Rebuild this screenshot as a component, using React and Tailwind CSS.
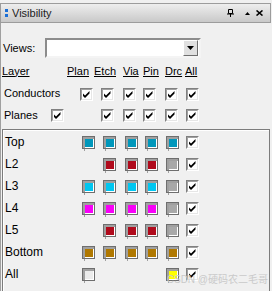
import React from 'react';

// column widths shared by the checkbox rows and the colour rows
const checkCols = ['w-[21px]', 'w-[22px]', 'w-[20px]', 'w-[22px]', 'w-[21px]'];
const swatchCols = ['w-[21px]', 'w-[22px]', 'w-[20px]', 'w-[21px]', 'w-[20px]'];

const layers = [
  { name: 'Top', fills: ['bg-[#0097bb]', 'bg-[#0097bb]', 'bg-[#0097bb]', 'bg-[#0097bb]', 'bg-[#0097bb]'] },
  { name: 'L2', fills: [null, 'bg-[#b00a1c]', 'bg-[#b00a1c]', 'bg-[#b00a1c]', 'bg-[#a8a8a8]'] },
  { name: 'L3', fills: ['bg-[#00c6f0]', 'bg-[#00c6f0]', 'bg-[#00c6f0]', 'bg-[#00c6f0]', 'bg-[#a8a8a8]'] },
  { name: 'L4', fills: ['bg-[#f800f8]', 'bg-[#f800f8]', 'bg-[#f800f8]', 'bg-[#f800f8]', 'bg-[#a8a8a8]'] },
  { name: 'L5', fills: [null, 'bg-[#b00a1c]', 'bg-[#b00a1c]', 'bg-[#b00a1c]', 'bg-[#a8a8a8]'] },
  { name: 'Bottom', fills: ['bg-[#b07800]', 'bg-[#b07800]', 'bg-[#b07800]', 'bg-[#b07800]', 'bg-[#b07800]'] },
  { name: 'All', fills: ['bg-[#ececec]', null, null, null, 'bg-[#ffff00]'] },
];

function Check() {
  return (
    <div className="w-[13px] h-[13px] border border-t-[#808080] border-l-[#808080] border-r-white border-b-white">
      <div className="w-full h-full border border-t-[#a0a0a0] border-l-[#a0a0a0] border-r-[#e6e6e6] border-b-[#e6e6e6] bg-white">
        <svg width="9" height="9" viewBox="0 0 9 9" className="block">
          <path d="M1 3.5 3 5.5 7.5 1v2.5L3 8 1 6z" fill="#000" />
        </svg>
      </div>
    </div>
  );
}

function Swatch({ fill }) {
  return (
    <div className="relative w-[13px] h-[13px] border border-[#6e6e6e] bg-[#a0a0a0] pl-[2px] pt-[2px]">
      <div className={`w-[9px] h-[9px] border-r border-b border-white ${fill}`} />
      <span className="absolute left-[1px] -bottom-[3px] w-px h-[2px] bg-[#a0a0a0]" />
    </div>
  );
}

export default function App() {
  return (
    <div className="relative w-[272px] h-[291px] overflow-hidden bg-[#f0f0f0] text-[11px] text-black font-['Liberation_Sans',Arial,sans-serif]">
      {/* title bar */}
      <div className="pt-[3px]">
        <div className="flex items-center h-[20px] w-[271px] border border-[#9c9c9c] bg-gradient-to-b from-[#eeeeee] to-[#c9c9c9]">
          <div className="flex flex-col gap-[2px] ml-[4px] mr-[4px]">
            <span className="w-[3px] h-[3px] bg-[#1a6fd6]" />
            <span className="w-[3px] h-[3px] bg-[#1a6fd6]" />
          </div>
          <span className="text-[#1c1c1c]">Visibility</span>
          <div className="ml-auto flex items-center mr-[7px]">
            <svg width="7" height="8" viewBox="0 0 7 8" className="block">
              <path d="M1.5 0.5h4v4h-4z M0 5h7 M3.5 5v3" stroke="#000" strokeWidth="1" fill="none" />
            </svg>
            <svg width="5" height="3" viewBox="0 0 5 3" className="block ml-[11px]">
              <path d="M2.5 0 5 3H0z" fill="#000" />
            </svg>
            <svg width="7" height="6" viewBox="0 0 7 6" className="block ml-[6px]">
              <path d="M0.5 0.5 6.5 5.5 M6.5 0.5 0.5 5.5" stroke="#000" strokeWidth="1.6" />
            </svg>
          </div>
        </div>
      </div>

      {/* body */}
      <div className="border-l border-[#a0a0a0] h-[268px] pt-[15px]">
        <div className="flex items-center h-[20px]">
          <span className="w-[44px] pl-[2px]">Views:</span>
          <div className="flex items-center justify-end w-[156px] h-[20px] border-2 border-t-[#8c8c8c] border-l-[#8c8c8c] border-r-[#f4f4f4] border-b-[#f4f4f4] bg-white pr-[1px]">
            <div className="flex items-center justify-center w-[15px] h-[16px] bg-[#e0e0e0] border border-t-white border-l-white border-r-[#6e6e6e] border-b-[#6e6e6e]">
              <svg width="7" height="4" viewBox="0 0 7 4" className="block">
                <path d="M0 0h7L3.5 4z" fill="#000" />
              </svg>
            </div>
          </div>
        </div>

        <div className="flex items-center h-[22px] mt-[2px]">
          <span className="w-[66px] pl-[1px] underline">Layer</span>
          <span className="w-[27px] underline">Plan</span>
          <span className="w-[29px] underline">Etch</span>
          <span className="w-[20px] underline">Via</span>
          <span className="w-[22px] underline">Pin</span>
          <span className="w-[20px] underline">Drc</span>
          <span className="underline">All</span>
        </div>

        <div className="flex items-center h-[22px]">
          <span className="w-[79px] pl-[3px]">Conductors</span>
          {checkCols.map((w, i) => (
            <div key={i} className={`${w} shrink-0 pt-[2px]`}>
              <Check />
            </div>
          ))}
          <div className="pt-[2px]"><Check /></div>
        </div>

        <div className="flex items-center h-[22px]">
          <span className="w-[50px] pl-[3px]">Planes</span>
          <div className="w-[50px] shrink-0"><Check /></div>
          {checkCols.slice(1).map((w, i) => (
            <div key={i} className={`${w} shrink-0`}>
              <Check />
            </div>
          ))}
          <Check />
        </div>

        {/* layer colour group */}
        <div className="ml-[1px] mt-[3px] w-[268px] h-[180px] border border-[#7c7c7c] shadow-[inset_1px_1px_0_#ffffff] pt-[1px]">
          {layers.map((l) => (
            <div key={l.name} className="flex items-center h-[22px]">
              <span className="w-[79px] pl-[2px] text-[12px]">{l.name}</span>
              {l.fills.map((f, i) => (
                <div key={i} className={`${swatchCols[i]} shrink-0`}>
                  {f && <Swatch fill={f} />}
                </div>
              ))}
              <Check />
            </div>
          ))}
        </div>
      </div>

      <span className="absolute right-[4px] bottom-[6px] text-[10px] leading-none text-[#cacaca] font-['Liberation_Sans','Noto_Sans_CJK_SC',sans-serif]">
        CSDN @硬码农二毛哥
      </span>
    </div>
  );
}
